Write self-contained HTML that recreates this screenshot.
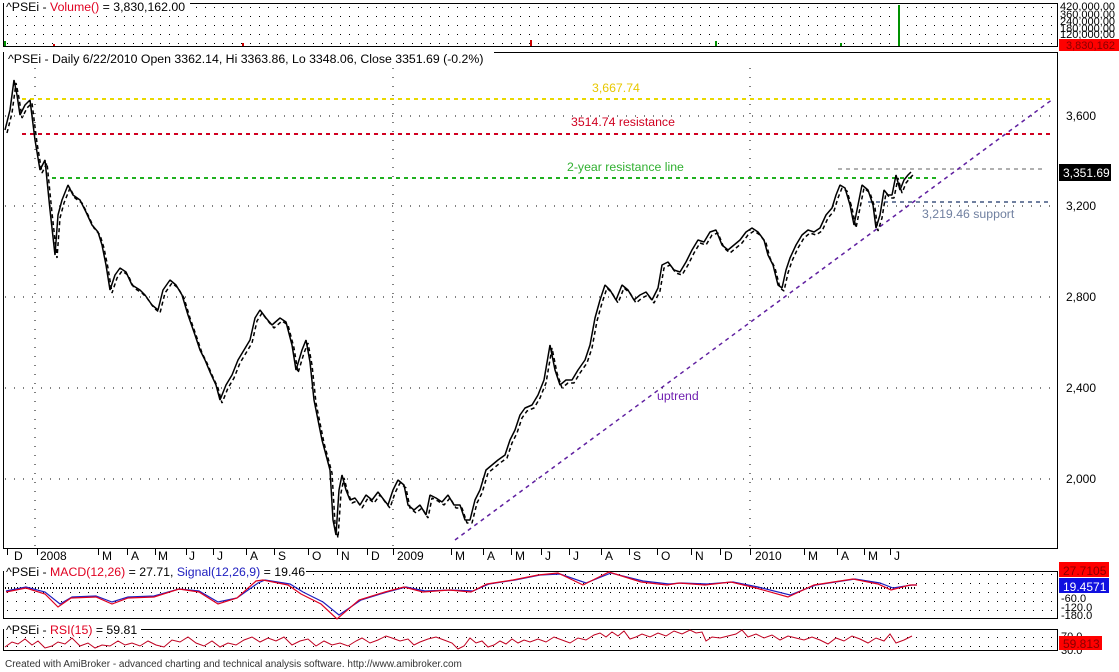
<!DOCTYPE html>
<html><head><meta charset="utf-8"><style>
html,body{margin:0;padding:0;background:#fff;width:1119px;height:672px;overflow:hidden}
svg{display:block;font-family:"Liberation Sans",Arial,sans-serif}
</style></head><body>
<svg width="1119" height="672" viewBox="0 0 1119 672">
<defs>
<pattern id="dots" x="3" y="3" width="9" height="9" patternUnits="userSpaceOnUse"><rect x="4" y="4" width="1" height="1" fill="#000"/></pattern>
</defs>
<!-- Volume pane -->
<rect x="3.5" y="3.5" width="1054" height="43" fill="url(#dots)" stroke="#000"/>
<rect x="4" y="0" width="186" height="10" fill="#fff"/>
<text x="6" y="11" font-size="12.3"><tspan fill="#000">^PSEi - </tspan><tspan fill="#e00020">Volume()</tspan><tspan fill="#000"> = 3,830,162.00</tspan></text>
<rect x="898" y="5" width="2" height="41" fill="#009000"/>
<rect x="4" y="41" width="2" height="5" fill="#009000"/>
<rect x="53" y="44" width="2" height="2" fill="#c00"/>
<rect x="242" y="43" width="2" height="3" fill="#c00"/>
<rect x="530" y="40" width="2" height="6" fill="#c00"/>
<rect x="715" y="41" width="2" height="5" fill="#009000"/>
<rect x="840" y="43" width="2" height="3" fill="#009000"/>
<g font-size="11" fill="#000"><text x="1060" y="10">420,000,00</text><text x="1060" y="18">360,000,00</text><text x="1060" y="25">240,000,00</text><text x="1060" y="32">180,000,00</text><text x="1060" y="38">120,000,00</text></g>
<rect x="1059" y="39" width="60" height="12" fill="#f00"/>
<text x="1066" y="49" font-size="11" fill="#800">3,830,162</text>

<!-- Main pane -->
<rect x="3.5" y="52.5" width="1054" height="496" fill="none" stroke="#000"/>
<rect x="4" y="50" width="490" height="10" fill="#fff"/>
<text x="8" y="63" font-size="12.3" fill="#000">^PSEi - Daily 6/22/2010 Open 3362.14, Hi 3363.86, Lo 3348.06, Close 3351.69 (-0.2%)</text>
<g stroke="#000" stroke-width="1" stroke-dasharray="1,8">
<line x1="5" y1="116" x2="1056" y2="116"/><line x1="5" y1="206" x2="1056" y2="206"/><line x1="5" y1="297" x2="1056" y2="297"/><line x1="5" y1="388" x2="1056" y2="388"/><line x1="5" y1="479" x2="1056" y2="479"/>
<line x1="35" y1="68" x2="35" y2="547"/><line x1="393" y1="68" x2="393" y2="547"/><line x1="750" y1="68" x2="750" y2="547"/>
</g>
<g stroke-width="2" stroke-dasharray="4,4">
<line x1="22" y1="99" x2="1052" y2="99" stroke="#e8d800"/>
<line x1="22" y1="134" x2="1052" y2="134" stroke="#d00020"/>
<line x1="52" y1="178" x2="936" y2="178" stroke="#20b020"/>
<line x1="838" y1="169" x2="1043" y2="169" stroke="#b0b0b0"/>
<line x1="868" y1="202" x2="1048" y2="202" stroke="#7080a0"/>
<line x1="455" y1="540" x2="1053" y2="99" stroke="#6020a0" stroke-width="1.5"/>
</g>
<g font-size="12.3">
<text x="592" y="92" fill="#e8c800">3,667.74</text>
<text x="571" y="126" fill="#d00020">3514.74 resistance</text>
<text x="567" y="171" fill="#30b030">2-year resistance line</text>
<text x="922" y="218" fill="#7080a0">3,219.46 support</text>
<text x="657" y="400" fill="#7020b0">uptrend</text>
</g>
<g fill="none" stroke="#000" stroke-linejoin="bevel">
<polyline id="px" stroke-width="1.5" points="5,130 10,110 14,80 17,95 20,115 25,105 30,100 35,140 40,170 45,160 50,210 55,255 58,215 62,200 68,185 73,195 80,200 86,212 92,225 98,232 102,245 106,265 110,290 115,275 120,268 126,272 132,285 140,290 145,295 152,305 158,310 163,290 170,280 176,285 182,295 188,315 195,335 200,350 205,360 210,372 216,385 220,400 226,385 232,375 238,360 244,350 250,340 255,318 260,310 266,318 272,325 280,318 286,322 292,345 296,370 302,350 306,340 310,362 314,400 318,420 322,440 326,455 330,470 333,520 336,535 339,490 342,475 346,490 350,500 355,498 360,505 366,495 372,500 378,492 384,500 388,505 393,490 398,480 404,485 408,505 414,510 420,505 426,515 430,495 436,498 442,502 448,495 454,505 460,505 465,520 470,520 475,500 480,490 486,470 492,465 498,460 505,455 510,440 515,430 520,415 525,408 532,405 538,395 544,380 550,345 555,370 560,385 566,380 572,380 578,370 585,360 590,345 595,318 600,300 605,285 610,290 616,300 622,285 628,290 634,300 640,295 646,292 652,300 658,288 662,265 668,262 674,270 680,272 686,262 692,250 698,240 704,242 710,232 716,230 722,245 728,250 734,245 740,240 746,232 752,228 758,232 764,240 768,255 773,265 778,285 782,288 786,270 790,258 796,245 802,235 808,230 814,232 820,228 826,215 832,208 836,195 840,185 845,188 850,205 854,225 858,205 862,185 868,190 873,205 876,228 880,215 884,190 888,195 892,195 896,175 900,190 904,180 908,175 911,172"/>
<use href="#px" transform="translate(2,3)" stroke-width="3.5" stroke-dasharray="4,3"/>
</g>
<g font-size="12" fill="#000">
<text x="1066" y="120">3,600</text><text x="1066" y="210">3,200</text><text x="1066" y="301">2,800</text><text x="1066" y="392">2,400</text><text x="1066" y="483">2,000</text>
</g>
<rect x="1059" y="164" width="52" height="17" fill="#000"/>
<text x="1063" y="177" font-size="12" fill="#fff">3,351.69</text>

<!-- month labels -->
<g font-size="12" fill="#000">
<text x="14" y="560">D</text><text x="40" y="560">2008</text><text x="102" y="560">M</text><text x="131" y="560">A</text><text x="158" y="560">M</text><text x="189" y="560">J</text><text x="217" y="560">J</text><text x="250" y="560">A</text><text x="278" y="560">S</text><text x="312" y="560">O</text><text x="341" y="560">N</text><text x="371" y="560">D</text><text x="397" y="560">2009</text><text x="455" y="560">M</text><text x="487" y="560">A</text><text x="515" y="560">M</text><text x="545" y="560">J</text><text x="573" y="560">J</text><text x="605" y="560">A</text><text x="633" y="560">S</text><text x="661" y="560">O</text><text x="695" y="560">N</text><text x="724" y="560">D</text><text x="755" y="560">2010</text><text x="808" y="560">M</text><text x="841" y="560">A</text><text x="868" y="560">M</text><text x="894" y="560">J</text>
</g>
<g stroke="#000"><path d="M7.5 549v6M37.5 549v6M98.5 549v6M127.5 549v6M155.5 549v6M186.5 549v6M213.5 549v6M246.5 549v6M274.5 549v6M308.5 549v6M337.5 549v6M367.5 549v6M393.5 549v6M451.5 549v6M483.5 549v6M511.5 549v6M541.5 549v6M569.5 549v6M601.5 549v6M629.5 549v6M657.5 549v6M691.5 549v6M720.5 549v6M750.5 549v6M804.5 549v6M837.5 549v6M864.5 549v6M890.5 549v6"/></g>

<!-- MACD pane -->
<rect x="3.5" y="571.5" width="1054" height="47" fill="url(#dots)" stroke="#000"/>
<rect x="4" y="566" width="302" height="10" fill="#fff"/>
<text x="6" y="576" font-size="12.3"><tspan>^PSEi - </tspan><tspan fill="#e00020">MACD(12,26)</tspan><tspan> = 27.71, </tspan><tspan fill="#2020c0">Signal(12,26,9)</tspan><tspan> = 19.46</tspan></text>
<line x1="5" y1="588" x2="917" y2="588" stroke="#000" stroke-width="2" stroke-dasharray="1,2"/>
<polyline fill="none" stroke="#2020c0" stroke-width="1.2" points="6,591 26,587 45,592 60,604 72,597 96,596 112,602 128,597 154,596 179,589 199,591 218,602 237,598 258,583 265,580 290,584 303,592 323,602 339,615 361,600 387,592 406,587 425,591 451,590 473,591 489,584 515,580 540,575 560,574 586,583 611,573 643,581 669,584 681,583 707,584 733,582 758,587 790,595 816,585 855,579 880,583 893,588 912,585 917,585"/>
<polyline fill="none" stroke="#e00020" stroke-width="1.2" points="6,592 26,588 45,594 58,607 71,598 96,597 112,604 128,598 154,597 179,589 199,592 218,604 237,598 256,581 263,580 288,585 301,594 321,604 337,619 359,600 385,592 404,587 423,592 449,590 471,592 487,584 513,580 538,575 558,573 583,585 609,572 641,582 667,585 679,583 705,585 731,582 756,588 788,597 814,585 853,579 878,584 891,590 910,585 917,585"/>
<rect x="1059" y="562" width="50" height="15" fill="#f00"/>
<text x="1063" y="575" font-size="12" fill="#800">27.7105</text>
<rect x="1059" y="578" width="50" height="15" fill="#1010e0"/>
<text x="1063" y="591" font-size="12" fill="#fff">19.4571</text>
<g font-size="11" fill="#000"><text x="1061" y="602">-60.0</text><text x="1061" y="611">-120.0</text><text x="1061" y="619">-180.0</text></g>

<!-- RSI pane -->
<rect x="3.5" y="629.5" width="1054" height="21" fill="url(#dots)" stroke="#000"/>
<rect x="4" y="624" width="137" height="10" fill="#fff"/>
<text x="6" y="634" font-size="12.3"><tspan>^PSEi - </tspan><tspan fill="#e00020">RSI(15)</tspan><tspan> = 59.81</tspan></text>
<polyline fill="none" stroke="#c00020" stroke-width="1" points="5,647 12,642 18,644 25,639 32,645 38,641 45,648 52,646 58,642 65,644 72,638 80,646 88,643 95,648 102,645 110,646 118,641 125,645 132,643 140,646 148,641 156,645 164,647 172,640 180,642 188,637 196,643 204,646 212,641 220,647 228,643 236,645 244,640 252,637 260,642 268,638 276,641 284,637 292,645 300,641 308,639 316,646 324,641 332,645 340,643 348,646 356,641 362,638 370,643 378,640 386,636 392,638 400,641 408,639 414,645 420,642 428,639 436,637 444,640 452,643 458,649 464,646 470,638 476,643 482,641 488,647 494,645 500,641 506,644 512,639 518,643 524,640 530,642 538,639 546,642 554,637 562,640 570,643 578,638 586,640 594,635 600,633 606,637 612,632 618,636 624,631 630,639 636,637 642,634 650,637 658,633 666,636 674,631 682,634 690,630 696,633 702,632 706,641 712,637 720,638 728,636 736,634 742,630 748,637 756,634 764,638 772,635 780,640 788,636 796,638 804,640 812,637 820,640 828,644 836,638 844,641 852,636 860,639 868,643 876,638 884,641 890,634 896,643 904,640 912,636"/>
<text x="1061" y="640" font-size="11" fill="#000">70.0</text>
<text x="1061" y="654" font-size="11" fill="#000">30.0</text>
<rect x="1059" y="636" width="43" height="14" fill="#f00"/>
<text x="1063" y="648" font-size="12" fill="#800">59.813</text>

<text x="5" y="667" font-size="10" fill="#333">Created with AmiBroker - advanced charting and technical analysis software. http://www.amibroker.com</text>
</svg>
</body></html>
